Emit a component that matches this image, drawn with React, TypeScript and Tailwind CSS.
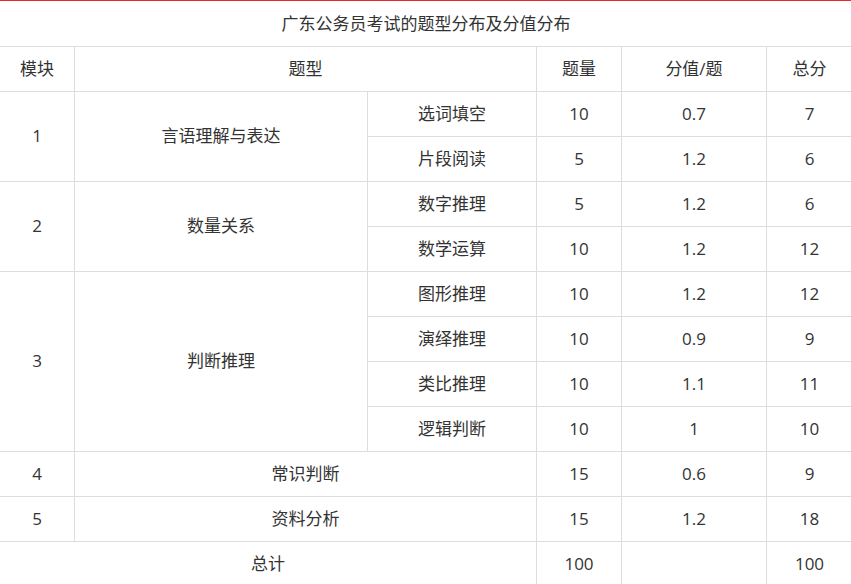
const c = "border border-[#dddddd] text-center font-normal";

export default function App() {
  const td = (t: string | number, extra = "", rs?: number, cs?: number) => (
    <td rowSpan={rs} colSpan={cs} className={`${c} ${extra}`}>{t}</td>
  );
  return (
    <div className="w-[851px] bg-white text-[#333] text-[17px] overflow-hidden" style={{ fontFamily: '"Open Sans", "Noto Sans CJK SC", sans-serif' }}>
      <div className="h-[1px] bg-[#e8262d]" />
      <table className="w-[853px] -ml-[1px] border-collapse table-fixed">
        <colgroup>
          <col className="w-[75px]" />
          <col className="w-[293px]" />
          <col className="w-[169px]" />
          <col className="w-[85px]" />
          <col className="w-[145px]" />
          <col className="w-[86px]" />
        </colgroup>
        <tbody className="[&_tr]:h-[45px]">
          <tr className="[&>td]:border-t-0">{td("广东公务员考试的题型分布及分值分布", "", undefined, 6)}</tr>
          <tr>{td("模块")}{td("题型", "", undefined, 2)}{td("题量")}{td("分值/题")}{td("总分")}</tr>
          <tr>{td(1, "", 2)}{td("言语理解与表达", "", 2)}{td("选词填空")}{td(10)}{td(0.7)}{td(7)}</tr>
          <tr>{td("片段阅读")}{td(5)}{td(1.2)}{td(6)}</tr>
          <tr>{td(2, "", 2)}{td("数量关系", "", 2)}{td("数字推理")}{td(5)}{td(1.2)}{td(6)}</tr>
          <tr>{td("数学运算")}{td(10)}{td(1.2)}{td(12)}</tr>
          <tr>{td(3, "", 4)}{td("判断推理", "", 4)}{td("图形推理")}{td(10)}{td(1.2)}{td(12)}</tr>
          <tr>{td("演绎推理")}{td(10)}{td(0.9)}{td(9)}</tr>
          <tr>{td("类比推理")}{td(10)}{td(1.1)}{td(11)}</tr>
          <tr>{td("逻辑判断")}{td(10)}{td(1)}{td(10)}</tr>
          <tr>{td(4)}{td("常识判断", "", undefined, 2)}{td(15)}{td(0.6)}{td(9)}</tr>
          <tr>{td(5)}{td("资料分析", "", undefined, 2)}{td(15)}{td(1.2)}{td(18)}</tr>
          <tr>{td("总计", "", undefined, 3)}{td(100)}{td("")}{td(100)}</tr>
        </tbody>
      </table>
    </div>
  );
}
